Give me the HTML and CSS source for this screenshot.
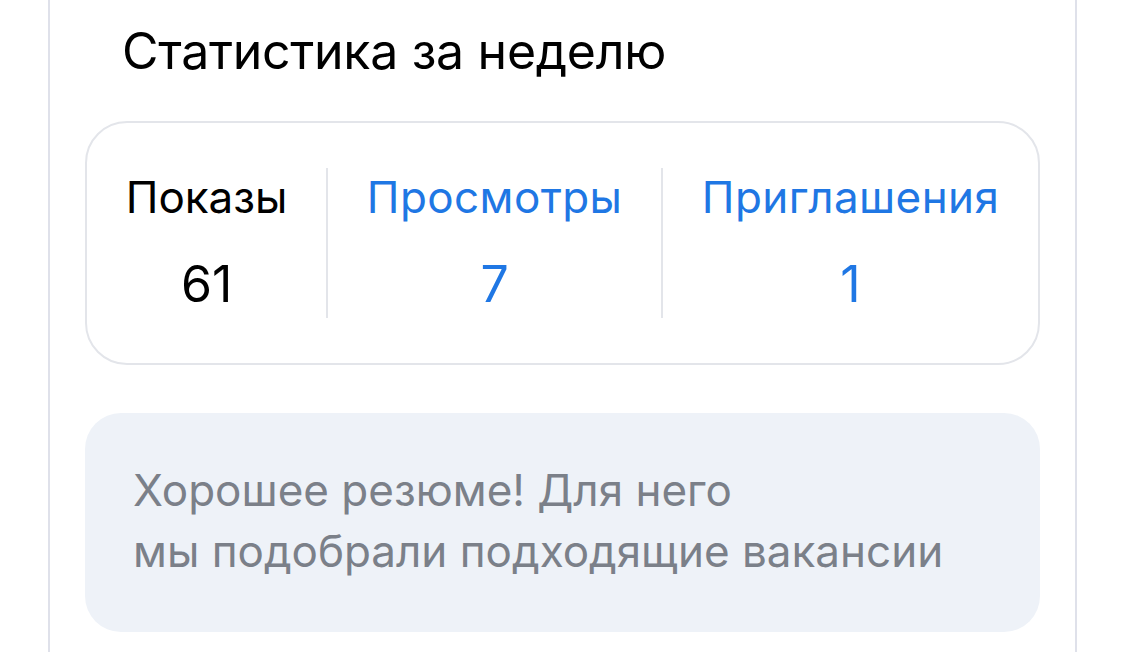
FILE: index.html
```html
<!DOCTYPE html>
<html lang="ru">
<head>
<meta charset="utf-8">
<title>Статистика за неделю</title>
<link rel="stylesheet" href="styles.css">
</head>
<body>
  <main class="panel">
    <h2 class="title">Статистика за неделю</h2>
    <section class="stats">
      <div class="stat">
        <div class="stat-label">Показы</div>
        <div class="stat-value">61</div>
      </div>
      <div class="stat stat-link">
        <div class="stat-label">Просмотры</div>
        <div class="stat-value">7</div>
      </div>
      <div class="stat stat-link">
        <div class="stat-label">Приглашения</div>
        <div class="stat-value">1</div>
      </div>
    </section>
    <p class="note">Хорошее резюме! Для него<br>мы подобрали подходящие вакансии</p>
  </main>
</body>
</html>
```

FILE: styles.css
```css
html, body {
  margin: 0;
  padding: 0;
  background: #ffffff;
}

body {
  font-family: Inter, "Noto Sans", "Liberation Sans", sans-serif;
  color: #000000;
}

.panel {
  margin: 0 48px;
  min-height: 652px;
  border-left: 2px solid #dfe1ea;
  border-right: 2px solid #dfe1ea;
  padding: 0 35px;
  box-sizing: border-box;
}

.title {
  margin: 0;
  padding: 21px 0 0 37px;
  font-size: 50px;
  font-weight: 400;
  line-height: 60px;
  letter-spacing: -0.3px;
}

.stats {
  margin-top: 40px;
  height: 244px;
  box-sizing: border-box;
  border: 2px solid #e3e5ea;
  border-radius: 42px;
  padding: 45px 0;
  display: flex;
  justify-content: space-between;
}

.stat {
  flex: 1 1 auto;
  display: flex;
  flex-direction: column;
  align-items: center;
  padding: 0 30px;
}

.stat + .stat {
  border-left: 2px solid #e3e5ea;
}

.stat-label {
  font-size: 44px;
  line-height: 54px;
  padding-top: 2px;
  white-space: nowrap;
}

.stat-link .stat-label {
  letter-spacing: 0.4px;
}

.stat-value {
  font-size: 50px;
  line-height: 60px;
  margin-top: 30px;
}

.stat-link {
  color: #1f77e4;
}

.note {
  margin: 48px 0 0;
  height: 219px;
  box-sizing: border-box;
  background: #eef2f8;
  border-radius: 36px;
  padding: 47px 48px 0;
  font-size: 44px;
  line-height: 61px;
  color: #7b8089;
  white-space: nowrap;
}
```
